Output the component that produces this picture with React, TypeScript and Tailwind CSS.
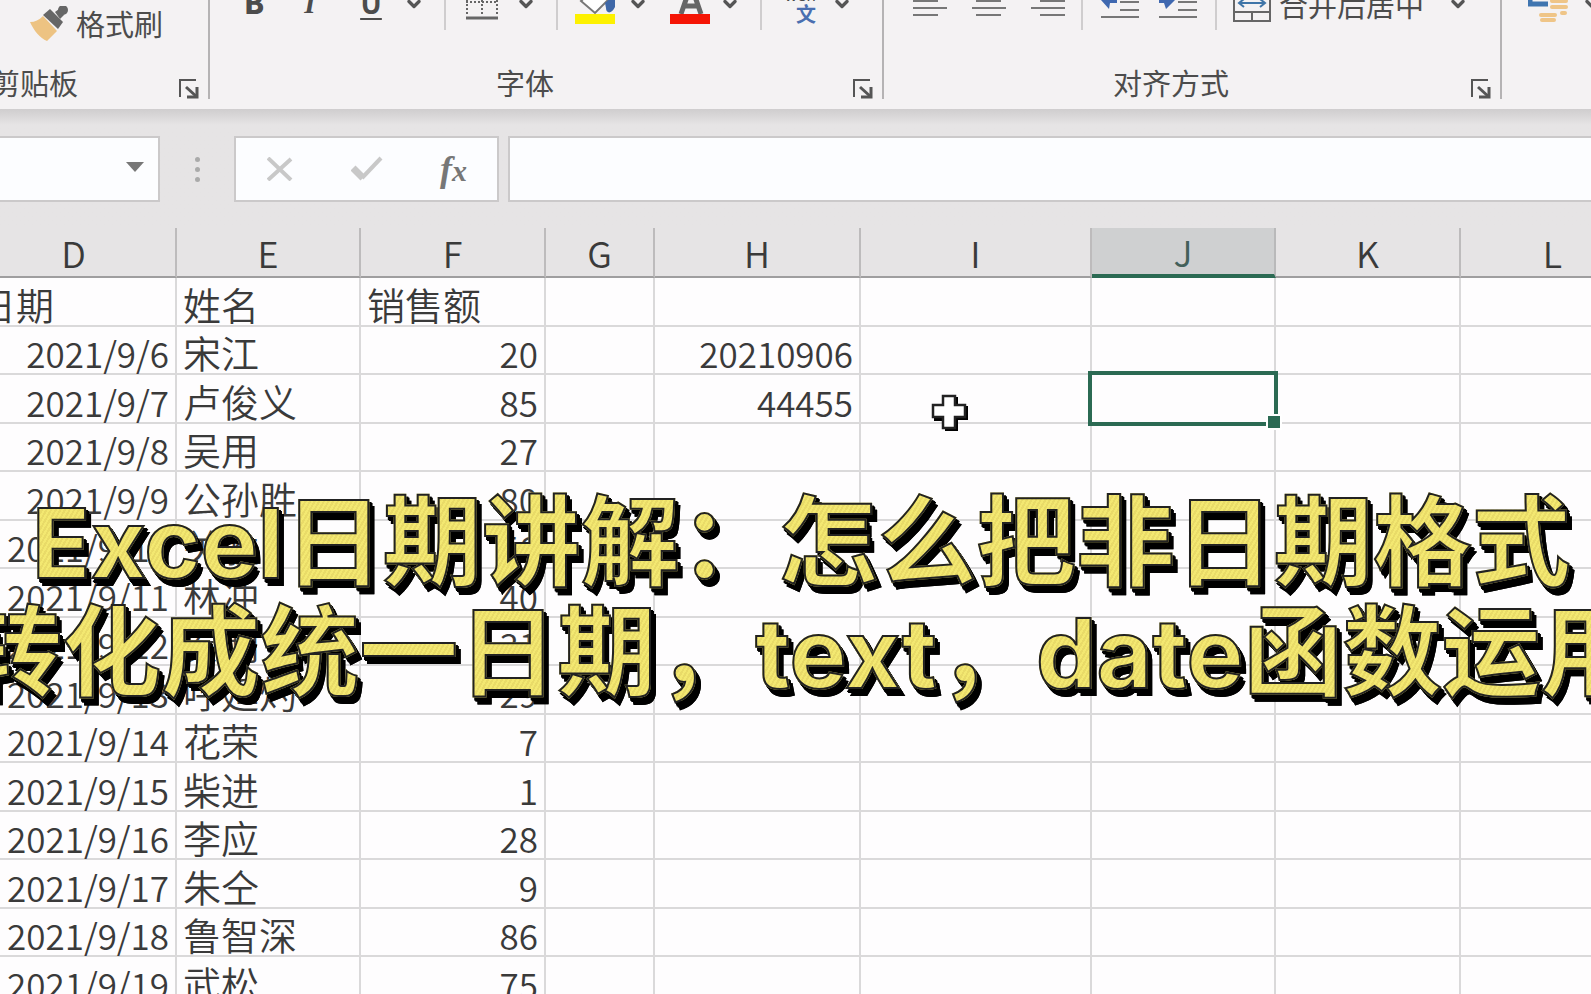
import { ChevronDown } from "lucide-react";

const columns = [
  { name: "D", width: "w-[205px]" },
  { name: "E", width: "w-[184px]" },
  { name: "F", width: "w-[185px]" },
  { name: "G", width: "w-[109px]" },
  { name: "H", width: "w-[206px]" },
  { name: "I", width: "w-[231px]" },
  { name: "J", width: "w-[184px]" },
  { name: "K", width: "w-[185px]" },
  { name: "L", width: "w-[185px]" },
];

const rows = [
  { date: "2021/9/6", name: "宋江", sales: 20, extra: "20210906" },
  { date: "2021/9/7", name: "卢俊义", sales: 85, extra: "44455" },
  { date: "2021/9/8", name: "吴用", sales: 27 },
  { date: "2021/9/9", name: "公孙胜", sales: 80 },
  { date: "2021/9/10", name: "关胜", sales: 56 },
  { date: "2021/9/11", name: "林冲", sales: 40 },
  { date: "2021/9/12", name: "秦明", sales: 31 },
  { date: "2021/9/13", name: "呼延灼", sales: 29 },
  { date: "2021/9/14", name: "花荣", sales: 7 },
  { date: "2021/9/15", name: "柴进", sales: 1 },
  { date: "2021/9/16", name: "李应", sales: 28 },
  { date: "2021/9/17", name: "朱仝", sales: 9 },
  { date: "2021/9/18", name: "鲁智深", sales: 86 },
  { date: "2021/9/19", name: "武松", sales: 75 },
];

const Chevron = ({ label }: { label: string }) => (
  <button aria-label={label} className="flex w-5 shrink-0 justify-center pb-3 text-[#555]">
    <ChevronDown className="h-[22px] w-[22px]" strokeWidth={4} />
  </button>
);

const Divider = () => <div className="h-[50px] w-0.5 shrink-0 self-start bg-[#cfcdce]" />;

const Launcher = ({ label }: { label: string }) => (
  <button aria-label={label} className="flex w-[42px] shrink-0 justify-center pl-1">
    <svg width="20" height="20" viewBox="0 0 20 20" fill="none" stroke="#555" strokeWidth="2">
      <path d="M1 18V1h16" />
      <path d="M7 8l11 10" strokeWidth="3" />
      <path d="M18 8v10H8" strokeWidth="3" />
    </svg>
  </button>
);

const GroupFooter = ({ title }: { title: string }) => (
  <div className="flex h-[30px] items-end">
    <span className="flex-1 pb-1 text-center text-[29px] leading-[26px]">{title}</span>
    <Launcher label={`${title}设置`} />
  </div>
);

const AlignButton = ({ label, d }: { label: string; d: string }) => (
  <button aria-label={label} className="flex w-[59px] shrink-0 justify-center">
    <svg width="36" height="60" viewBox="0 -20 36 60" fill="none" stroke="#777" strokeWidth="2">
      <path d={d} />
    </svg>
  </button>
);

const IndentButton = ({ label, arrow }: { label: string; arrow: string }) => (
  <button aria-label={label} className="flex w-[58px] shrink-0 justify-center">
    <svg width="40" height="60" viewBox="0 -20 40 60" fill="none" stroke="#777" strokeWidth="2">
      <path d="M20 2h19M20 10h19M1 17h38" />
      <path d={arrow} fill="#3f68b0" stroke="none" />
    </svg>
  </button>
);

const Ribbon = () => (
  <header className="flex h-[109px] shrink-0 overflow-hidden bg-[#f4f2f3] pb-[10px] text-[#4c4c4c]">
    {/* Clipboard */}
    <section className="-ml-[97px] flex w-[307px] shrink-0 flex-col justify-between border-r-2 border-[#b5b3b4]">
      <button className="flex h-12 items-center gap-2 pl-[127px] text-[29px]">
        <svg width="38" height="36" viewBox="0 0 38 36">
          <path d="M0 16c5 0 9-2 13-6l14 15-10 10C10 32 4 25 0 16z" fill="#edc382" />
          <path d="M13 9l7-6 13 13-5 7z" fill="#666" />
          <path d="M25 6l4-3 5 6-4 4z" fill="#666" />
          <circle cx="33" cy="4" r="5" fill="#666" />
        </svg>
        格式刷
      </button>
      <GroupFooter title="剪贴板" />
    </section>

    {/* Font */}
    <section className="flex w-[674px] shrink-0 flex-col justify-between border-r-2 border-[#b5b3b4]">
      <div className="-mt-5 flex h-[60px] items-center pl-4">
        <button className="w-14 shrink-0 pb-4 text-[29px] font-black">B</button>
        <button className="w-14 shrink-0 pb-3 font-['Liberation_Serif',serif] text-[29px] font-bold italic">I</button>
        <button className="w-[66px] shrink-0 pb-4 text-[29px] font-bold underline decoration-2 underline-offset-4">U</button>
        <Chevron label="下划线样式" />
        <div className="w-5 shrink-0" />
        <Divider />
        <button aria-label="边框" className="shrink-0">
          <svg width="70" height="60" viewBox="0 -20 70 60" fill="none" stroke="#666" strokeWidth="2">
            <path d="M20 2h32M21 0v16M36 0v16M51 0v16" strokeDasharray="2 2" />
            <path d="M20 18h32" strokeWidth="3" />
          </svg>
        </button>
        <Chevron label="边框样式" />
        <div className="w-5 shrink-0" />
        <Divider />
        <button aria-label="填充颜色" className="shrink-0">
          <svg width="70" height="60" viewBox="0 -20 70 60">
            <path d="M23 1L38-13 50 0 37 13z" fill="#fff" stroke="#777" strokeWidth="2" />
            <path d="M47 3l10-9v13c-3 7-9 7-9 1z" fill="#3f68a8" />
            <path d="M17 14h40v10H17z" fill="#fdf100" />
          </svg>
        </button>
        <Chevron label="选择填充颜色" />
        <button aria-label="字体颜色" className="ml-3 shrink-0">
          <svg width="60" height="60" viewBox="0 -20 60 60">
            <path d="M21 14L30-12h2l9 26M24 6h14" fill="none" stroke="#666" strokeWidth="5" />
            <path d="M10 14h40v10H10z" fill="#f51505" />
          </svg>
        </button>
        <Chevron label="选择字体颜色" />
        <div className="w-5 shrink-0" />
        <Divider />
        <button aria-label="拼音指南" className="flex w-[70px] shrink-0 flex-col items-end pr-4 pb-2">
          <span className="text-[16px] leading-4">wén</span>
          <span className="text-[20px] leading-6 font-bold text-[#4a6fb0]">文</span>
        </button>
        <Chevron label="拼音选项" />
      </div>
      <GroupFooter title="字体" />
    </section>

    {/* Alignment */}
    <section className="flex w-[618px] shrink-0 flex-col justify-between border-r-2 border-[#b5b3b4]">
      <div className="-mt-5 flex h-[60px] items-center pl-4">
        <AlignButton label="左对齐" d="M1 1h25M1 8h34M1 15h25" />
        <AlignButton label="居中" d="M5 1h25M1 8h34M5 15h25" />
        <AlignButton label="右对齐" d="M10 1h25M1 8h34M10 15h25" />
        <div className="w-1 shrink-0" />
        <Divider />
        <div className="w-2 shrink-0" />
        <IndentButton label="减少缩进量" arrow="M1 0L8-8v4h9v7h-7l-1 6z" />
        <IndentButton label="增加缩进量" arrow="M17 0l-7-8v4H1v7h5l2 6z" />
        <div className="w-2 shrink-0" />
        <Divider />
        <button className="ml-4 flex shrink-0 items-center gap-2 text-[29px]">
          <svg width="38" height="60" viewBox="0 -20 38 60" fill="none" stroke="#666" strokeWidth="2">
            <path d="M1-10v31h36v-31M1 12h36M19 12v9" />
            <path d="M6 3h26M11-1L6 3l5 4M27-1l5 4-5 4" stroke="#3f75a8" />
          </svg>
          <span className="pb-3 leading-[30px]">合并后居中</span>
        </button>
        <div className="w-6 shrink-0" />
        <Chevron label="合并选项" />
      </div>
      <GroupFooter title="对齐方式" />
    </section>

    {/* Number */}
    <section className="flex min-w-0 flex-1 overflow-hidden">
      <div className="-mt-5 flex h-[60px] items-center pl-[26px]">
        <button aria-label="会计数字格式" className="shrink-0">
          <svg width="42" height="60" viewBox="0 -20 42 60" fill="none">
            <path d="M2-4v8h18" stroke="#3f75b0" strokeWidth="5" />
            <path d="M6-3h12" stroke="#3f75b0" strokeWidth="2" />
            <path d="M24 1h14M24 7h14M34 13h3M13 15h14M14 20h12" stroke="#efc587" strokeWidth="4" strokeLinecap="round" />
          </svg>
        </button>
        <div className="w-3 shrink-0" />
        <Chevron label="数字格式选项" />
      </div>
    </section>
  </header>
);

const FormulaBar = () => (
  <div className="flex h-[119px] shrink-0 bg-[#e6e4e5] bg-linear-to-b from-[#cfcdce] to-[#e6e4e5] to-[16px] pt-[27px] pb-[26px]">
    <div className="flex w-[160px] shrink-0 items-center border-2 border-l-0 border-[#cbc9ca] bg-[#fcfdff]">
      <input aria-label="名称框" className="min-w-0 flex-1 text-3xl outline-none" />
      <button aria-label="展开名称框" className="px-[14px] pb-1">
        <svg width="18" height="10" viewBox="0 0 18 10">
          <path d="M0 0h18l-9 10z" fill="#777" />
        </svg>
      </button>
    </div>
    <div className="flex w-[74px] shrink-0 flex-col items-center justify-center gap-[5px]">
      <i className="h-[5px] w-[5px] rounded-full bg-[#aaa]" />
      <i className="h-[5px] w-[5px] rounded-full bg-[#aaa]" />
      <i className="h-[5px] w-[5px] rounded-full bg-[#aaa]" />
    </div>
    <div className="flex w-[265px] shrink-0 items-center border-2 border-[#cbc9ca] bg-[#fcfdff]">
      <button aria-label="取消" className="flex flex-1 justify-center">
        <svg width="26" height="24" viewBox="0 0 26 24" fill="none" stroke="#c8c8c8" strokeWidth="4">
          <path d="M1 1l23 22M24 2L1 23" />
        </svg>
      </button>
      <button aria-label="输入" className="flex flex-1 justify-center">
        <svg width="32" height="26" viewBox="0 0 32 26" fill="none" stroke="#c8c8c8">
          <path d="M2 12l10 10" strokeWidth="7" />
          <path d="M11 22L30 2" strokeWidth="4" />
        </svg>
      </button>
      <button
        aria-label="插入函数"
        className="flex flex-1 items-end justify-center font-['Liberation_Serif',serif] font-bold text-[#777] italic"
      >
        <span className="text-[36px] leading-10">f</span>
        <span className="text-[30px] leading-9">x</span>
      </button>
    </div>
    <input
      aria-label="编辑栏"
      className="ml-[9px] min-w-0 flex-1 border-2 border-r-0 border-[#cbc9ca] bg-[#fcfdff] px-3 text-3xl outline-none"
    />
  </div>
);

const cell = "border-r-2 border-b-2 border-[#dad9da] px-[6px] py-0 align-bottom whitespace-nowrap";
const textCell = `${cell} text-left text-[38px] leading-[42px]`;
const numberCell = `${cell} text-right text-[35px] leading-10`;

const Sheet = () => (
  <table className="-ml-7 w-max table-fixed border-separate border-spacing-0 bg-[#fefdfe] font-[350] text-[#3a3a3a]">
    <thead>
      <tr>
        {columns.map((col) => (
          <th
            key={col.name}
            scope="col"
            className={`${col.width} h-[50px] border-r-2 p-0 text-[36px] leading-[46px] font-[350] ${
              col.name === "J"
                ? "border-b-4 border-r-[#b9b9ba] border-b-[#2b6a53] bg-[#cfd0d1] text-[#43605a]"
                : "border-b-2 border-r-[#bdbbbc] border-b-[#9f9e9f] bg-[#e6e4e5]"
            }`}
          >
            {col.name}
          </th>
        ))}
      </tr>
    </thead>
    <tbody>
      <tr className="h-[49px]">
        <td className={textCell}>日期</td>
        <td className={textCell}>姓名</td>
        <td className={textCell}>销售额</td>
        {columns.slice(3).map((col) => (
          <td key={col.name} className={cell} />
        ))}
      </tr>
      {rows.map((row, index) => (
        <tr key={row.date} className="odd:h-[49px] even:h-12">
          <td className={numberCell}>{row.date}</td>
          <td className={textCell}>{row.name}</td>
          <td className={numberCell}>{row.sales}</td>
          <td className={cell} />
          <td className={numberCell}>{row.extra}</td>
          <td className={cell} />
          {index === 1 ? (
            <td className={`${cell} relative`}>
              <div className="absolute -inset-1 border-4 border-[#2b6a53]" />
              <div className="absolute -right-2 -bottom-2 h-4 w-4 border-2 border-white bg-[#2b6a53]" />
            </td>
          ) : (
            <td className={cell} />
          )}
          <td className={cell} />
          <td className={cell} />
        </tr>
      ))}
    </tbody>
  </table>
);

const MouseCross = () => (
  <svg className="absolute top-[394px] left-[931px]" width="38" height="38" viewBox="0 0 38 38">
    <path d="M14 3h13v9h10v14H27v11H14V27H3V14h11z" fill="#000" />
    <path d="M12 2h12v9h10v12H24v11H12V23H2V11h10z" fill="#fff" stroke="#222" strokeWidth="2.5" />
  </svg>
);

const Latin = ({ children }: { children: string }) => (
  <span className="font-['Inter',sans-serif] text-[96px] leading-none font-bold">{children}</span>
);

const captionLine =
  "bg-[repeating-linear-gradient(120deg,#f3e871_0_2px,#e9db68_2px_4px)] bg-clip-text text-transparent drop-shadow-[2px_3px_0_#000] [-webkit-text-stroke:2px_#222]";

const Caption = () => (
  <h1 className="absolute inset-x-0 top-[481px] flex flex-col items-center pl-3 text-[99px] leading-[108px] font-bold whitespace-nowrap drop-shadow-[3px_4px_0_#000]">
    <span className={captionLine}>
      <Latin>Excel</Latin>日期讲解：怎么把非日期格式
    </span>
    <span className={captionLine}>
      转化成统一日期，<Latin>text</Latin>，<Latin>date</Latin>函数运用
    </span>
  </h1>
);

const App = () => {
  return (
    <div className="relative flex h-screen flex-col overflow-hidden bg-[#e6e4e5] font-['Noto_Sans_CJK_SC',sans-serif]">
      <Ribbon />
      <FormulaBar />
      <main className="min-h-0 flex-1 overflow-hidden">
        <Sheet />
      </main>
      <MouseCross />
      <Caption />
    </div>
  );
};

export default App;
